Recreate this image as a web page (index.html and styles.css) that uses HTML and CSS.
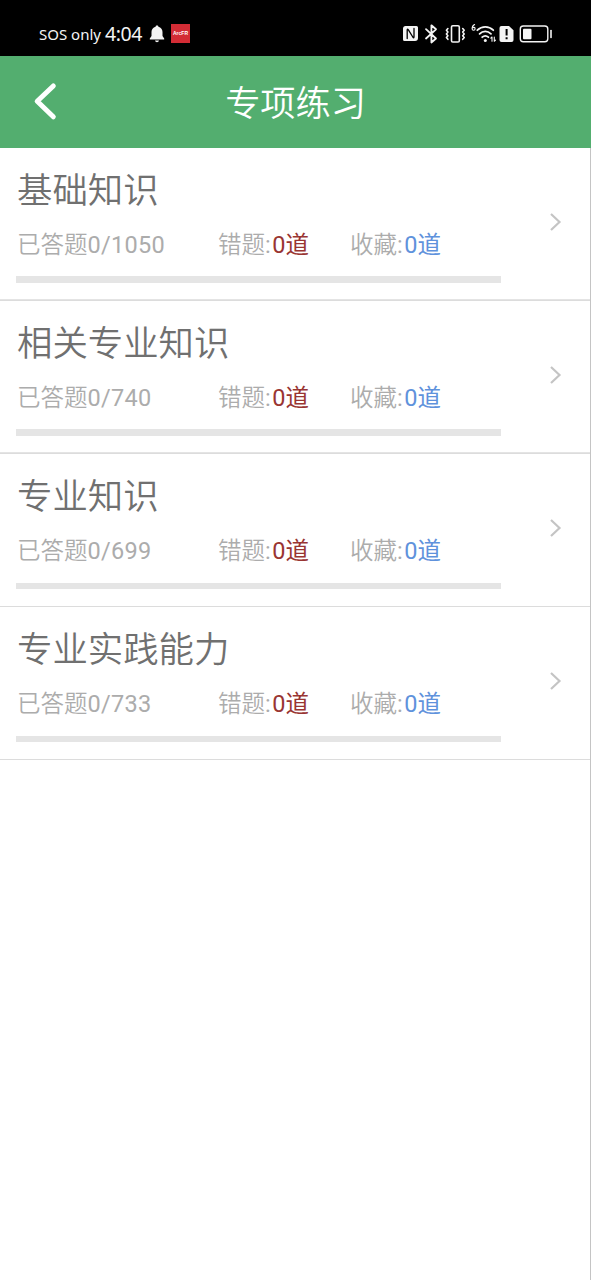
FILE: index.html
```html
<!DOCTYPE html>
<html lang="zh-CN">
<head>
<meta charset="utf-8">
<title>专项练习</title>
<link rel="stylesheet" href="styles.css">
</head>
<body>
<div class="screen">
  <div class="status">
    <span class="carrier">SOS only</span>
    <span class="time">4:04</span>
    <svg class="bell" width="16" height="18" viewBox="0 0 16 18" fill="#f4f4f4"><path d="M8 .5c.9 0 1.400.5 1.400 1.200C12 2.400 13.500 4.600 13.500 7v4l1.700 2.500v1H.8v-1L2.500 11V7c0-2.400 1.500-4.600 4.100-5.300C6.600 1 7.100.5 8 .5zM6 15.500h4c-.3 1.200-1 1.700-2 1.700s-1.700-.5-2-1.700z"/></svg>
    <span class="badge">ArcFR</span>
    <svg class="sysicons" width="152" height="22" viewBox="0 0 152 22" fill="none" stroke="#f4f4f4" stroke-width="1.600" stroke-linecap="round" stroke-linejoin="round">
      <path fill="#f4f4f4" stroke="none" d="M4 3h10.500a1.500 1.500 0 0 1 1.500 1.500V15a3 3 0 0 1-3 3H2.500A1.500 1.500 0 0 1 1 16.500V5.500A2.500 2.500 0 0 1 4 3z"/>
      <path stroke="#000" stroke-width="1.300" d="M5.200 15.500V7q0-1.800 1.200-.2l4.400 7.200q1.200 1.600 1.200-.2V5.500"/>
      <path stroke-width="1.800" d="M24 6.200l10 9.300-4.600 4V2.300l4.600 4-10 9.200"/>
      <rect x="49.500" y="2.800" width="7.800" height="16.200" rx="1.300"/>
      <path stroke-width="1.600" d="M45.900 5.500l-1.500 1.800 1.500 1.800-1.500 1.800 1.500 1.800-1.500 1.800 1.500 1.800M60.700 5.500l1.500 1.800-1.500 1.800 1.500 1.800-1.500 1.800 1.500 1.800-1.500 1.800"/>
      <path stroke-width="1.100" d="M72.600 1.500c-1.600.8-2.500 2.400-2.500 4.200a1.500 1.500 0 1 0 3 0c0-1.500-1.900-1.800-2.900-.4"/>
      <path stroke-width="1.800" d="M75.300 7.200c4.600-4.500 11.400-4.500 16 0M77.600 10.800c3.300-3.200 8-3.200 11.400 0M80.200 14.200c1.800-1.600 4.400-1.600 6.200 0"/>
      <circle cx="83.300" cy="17.500" r="1.500" fill="#f4f4f4" stroke="none"/>
      <path stroke-width="1.100" d="M90 18.300v-4.300l-1.200 1.200M92.300 14v4.300l1.200-1.200"/>
      <path fill="#f4f4f4" stroke="none" d="M99.500 3h7.500l4.500 4.300V17a2 2 0 0 1-2 2h-10a2 2 0 0 1-2-2V5a2 2 0 0 1 2-2z"/>
      <path stroke="#000" stroke-width="2" stroke-linecap="butt" d="M104.600 6v6.500M104.600 14.200v2"/>
      <rect x="118.300" y="3" width="27.500" height="15.800" rx="3" stroke-width="1.400"/>
      <rect x="121" y="5.700" width="8.500" height="10.500" rx="1" fill="#f4f4f4" stroke="none"/>
      <path stroke-width="1.600" d="M149 7.500v7"/>
    </svg>
  </div>
  <div class="header">
    <svg class="back" width="30" height="44" viewBox="0 0 30 44" fill="none" stroke="#fff" stroke-width="5" stroke-linecap="round" stroke-linejoin="round"><path d="M23.300 6L7.200 21.300l16.100 15.500"/></svg>
    <h1 class="title">专项练习</h1>
  </div>
  <div class="list">
    <div class="row thick">
      <div class="info">
        <div class="name">基础知识</div>
        <div class="stats"><span class="done">已答题<i>0/1050</i></span><span class="wrong">错题<i>:</i><b class="red">0道</b></span><span>收藏<i>:</i><b class="blue">0道</b></span></div>
        <div class="bar"></div>
      </div>
      <svg class="chev" width="14" height="20" viewBox="0 0 14 20"><path d="M2 2l8.500 8L2 18"/></svg>
    </div>
    <div class="row thick">
      <div class="info">
        <div class="name">相关专业知识</div>
        <div class="stats"><span class="done">已答题<i>0/740</i></span><span class="wrong">错题<i>:</i><b class="red">0道</b></span><span>收藏<i>:</i><b class="blue">0道</b></span></div>
        <div class="bar"></div>
      </div>
      <svg class="chev" width="14" height="20" viewBox="0 0 14 20"><path d="M2 2l8.500 8L2 18"/></svg>
    </div>
    <div class="row">
      <div class="info">
        <div class="name">专业知识</div>
        <div class="stats"><span class="done">已答题<i>0/699</i></span><span class="wrong">错题<i>:</i><b class="red">0道</b></span><span>收藏<i>:</i><b class="blue">0道</b></span></div>
        <div class="bar"></div>
      </div>
      <svg class="chev" width="14" height="20" viewBox="0 0 14 20"><path d="M2 2l8.500 8L2 18"/></svg>
    </div>
    <div class="row">
      <div class="info">
        <div class="name">专业实践能力</div>
        <div class="stats"><span class="done">已答题<i>0/733</i></span><span class="wrong">错题<i>:</i><b class="red">0道</b></span><span>收藏<i>:</i><b class="blue">0道</b></span></div>
        <div class="bar"></div>
      </div>
      <svg class="chev" width="14" height="20" viewBox="0 0 14 20"><path d="M2 2l8.500 8L2 18"/></svg>
    </div>
  </div>
</div>
</body>
</html>
```
FILE: styles.css
```css
* { box-sizing: border-box; }
body { margin: 0; background: #fff; font-family: Roboto, "Noto Sans CJK SC", sans-serif; font-weight: 350; }
.screen { height: 1280px; display: flex; flex-direction: column; overflow: hidden; }
.status { height: 56px; flex: none; background: #000; color: #f4f4f4; display: flex; align-items: center; padding: 11px 37px 0 39px; white-space: nowrap; }
.carrier { font: 400 15px/22px "Noto Sans", sans-serif; width: 66px; }
.time { font: 400 19.5px/22px "Noto Sans", sans-serif; width: 44px; letter-spacing: -0.4px; }
.bell { flex: none; }
.badge { width: 19px; height: 19px; margin-left: 6px; background: #d32c35; color: #fff; font: 700 5px/19px "Liberation Sans", sans-serif; text-align: center; }
.sysicons { margin-left: auto; flex: none; }
.header { height: 92px; flex: none; background: #53ae6f; display: grid; grid-template-columns: 80px 1fr 80px; align-items: center; }
.back { margin-left: 30px; }
.title { margin: 0; padding-top: 4px; color: #fff; font-size: 35.2px; line-height: 52px; font-weight: 350; text-align: center; }
.list { flex: 1; border-right: 1px solid #c4c4c4; }
.row { height: 153px; border-bottom: 1px solid #dcdcdc; display: flex; justify-content: space-between; padding: 17px 27px 0 16px; }
.thick { box-shadow: inset 0 -1px #e4e4e4; }
.info { width: 485px; }
.name { padding-left: 1px; font-size: 35.4px; line-height: 52px; color: #707070; white-space: nowrap; }
.stats { display: flex; padding-left: 1px; margin-top: 11px; font-size: 23.5px; line-height: 34px; color: #acacac; white-space: nowrap; }
.stats b { font-weight: 400; }
.stats i { font-style: normal; font-weight: 400; letter-spacing: 0.3px; }
.wrong i, .wrong + span i { letter-spacing: 1.500px; }
.done { width: 201px; }
.wrong { width: 132px; }
.stats .red { color: #993532; }
.stats .blue { color: #5f92dc; }
.bar { height: 6px; margin-top: 15px; background: #e5e5e5; }
.thick .bar { height: 7px; margin-top: 14px; }
.chev { margin-top: 47px; fill: none; stroke: #c4c4c4; stroke-width: 2.200; }
```
